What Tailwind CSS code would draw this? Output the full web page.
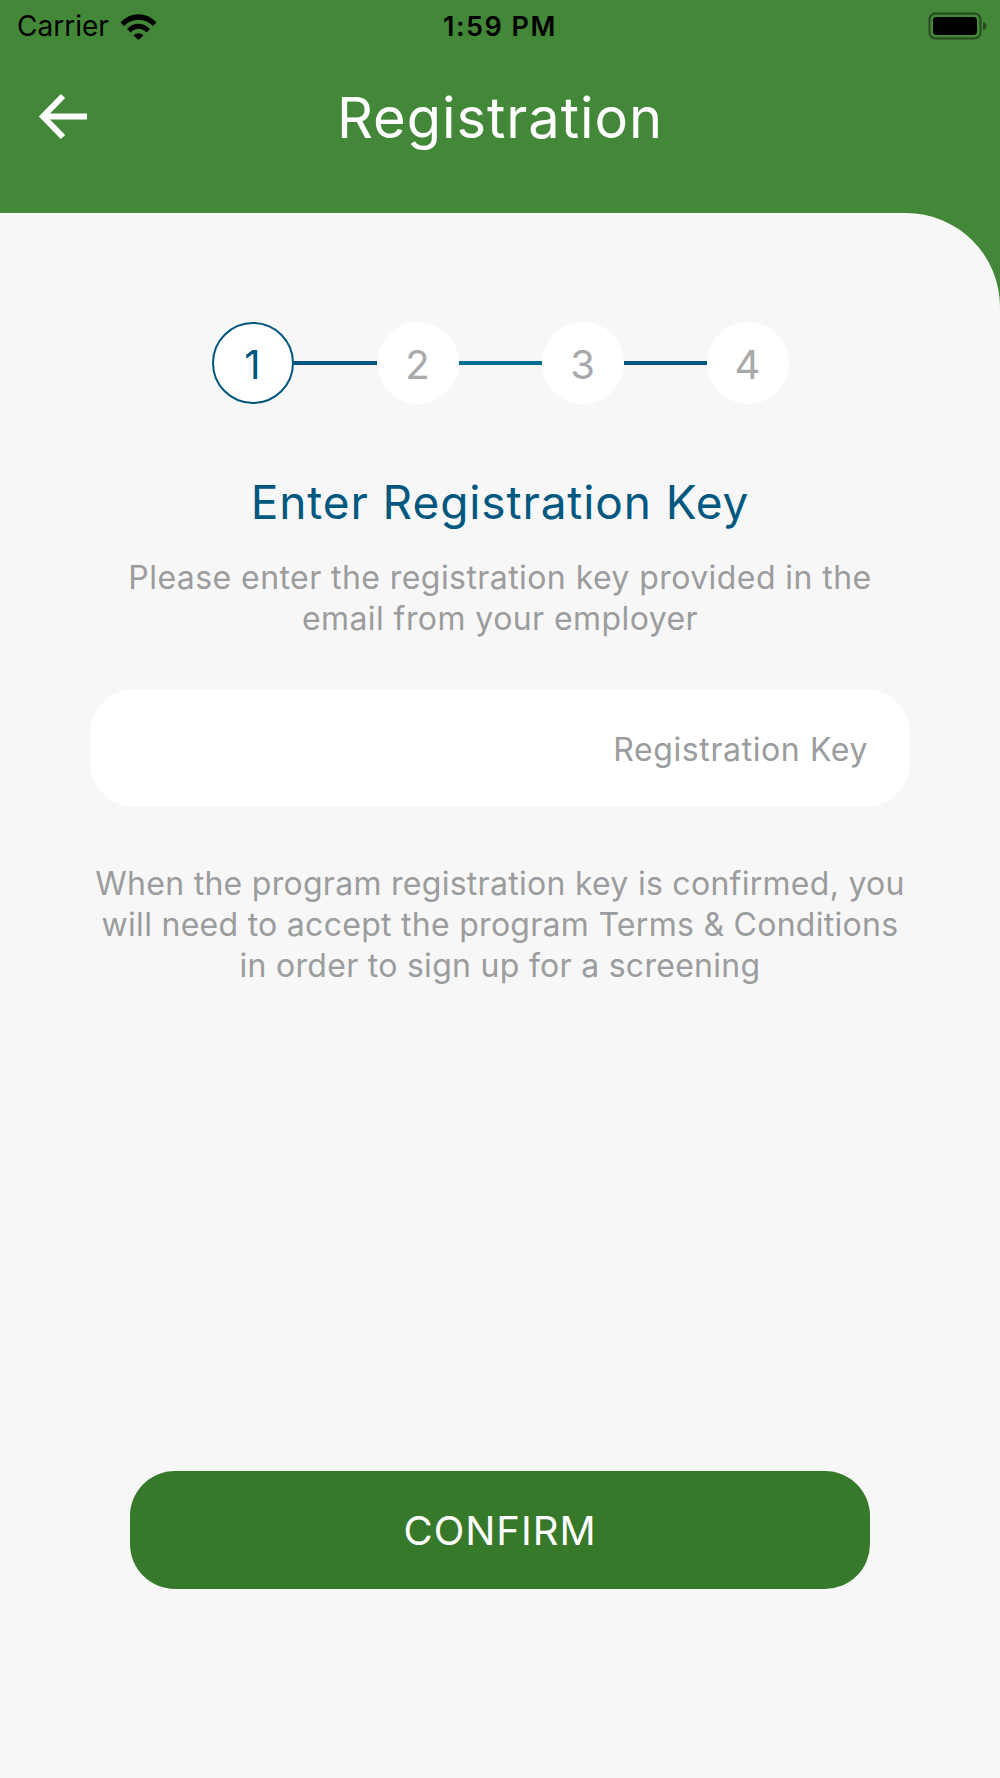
<!DOCTYPE html>
<html lang="en">
<head>
  <meta charset="UTF-8" />
  <meta name="viewport" content="width=device-width, initial-scale=1.0"/>
  <title>Registration</title>
  <script src="https://cdn.jsdelivr.net/npm/@tailwindcss/browser@4"></script>
</head>
<body class="bg-[#438838] font-['Inter',sans-serif]">
  <div class="w-[1000px] h-[1778px] flex flex-col overflow-hidden">
    <!-- status bar -->
    <div class="h-[52px] pl-[17px] pr-[12px] flex items-center justify-between text-black relative">
      <div class="flex items-center gap-[11px]">
        <span class="text-[28px] leading-none">Carrier</span>
        <svg width="37" height="27" viewBox="0 0 37 27" fill="#000">
          <path d="M0.5 9.5C10.5 -1.5 26.5 -1.5 36.5 9.5L33 13C25 4.5 12 4.5 4 13Z"/>
          <path d="M7 16C13.5 9 23.5 9 30 16L26.5 19.5C21.5 14.5 15.5 14.5 10.5 19.5Z"/>
          <path d="M13.5 22.5C16.5 19.5 20.5 19.5 23.5 22.5L18.5 27Z"/>
        </svg>
      </div>
      <span class="absolute left-[443px] top-[11px] text-[27px] leading-[32px] font-semibold tracking-[1.5px]">1:59 PM</span>
      <svg width="60" height="28" viewBox="0 0 60 28">
        <rect x="1.5" y="1.5" width="51" height="25" rx="6" fill="none" stroke="#000" stroke-opacity="0.45" stroke-width="2"/>
        <rect x="5" y="5" width="44" height="18" rx="3.5" fill="#000"/>
        <path d="M55 10C57.5 10.5 58.5 12 58.5 14C58.5 16 57.5 17.5 55 18Z" fill="#000" fill-opacity="0.45"/>
      </svg>
    </div>
    <!-- nav -->
    <div class="h-[161px] relative flex justify-center">
      <svg class="absolute left-[38px] top-[41px]" width="50" height="50" viewBox="0 0 50 50" fill="none" stroke="#fff" stroke-width="6">
        <path d="M49 23.5H6"/>
        <path d="M25 3L5 23.5L25 44"/>
      </svg>
      <h1 class="text-white text-[56px] leading-[68px] mt-[32px] font-normal tracking-[0.95px]">Registration</h1>
    </div>
    <!-- content -->
    <div class="flex-1 bg-[#f7f7f7] rounded-tr-[94px] flex flex-col items-center">
      <div class="flex items-center mt-[109px]">
        <div class="w-[82px] h-[82px] pt-[3px] rounded-full bg-white border-[2.5px] border-[#00577f] flex items-center justify-center text-[#00577f] text-[40px]">1</div>
        <div class="w-[83px] h-[4px] bg-[#00577f]"></div>
        <div class="w-[82px] h-[82px] pt-[3px] rounded-full bg-white flex items-center justify-center text-[#a8a9aa] text-[40px]">2</div>
        <div class="w-[83px] h-[4px] bg-[#006f94]"></div>
        <div class="w-[82px] h-[82px] pt-[3px] rounded-full bg-white flex items-center justify-center text-[#a8a9aa] text-[40px]">3</div>
        <div class="w-[83px] h-[4px] bg-[#00577f]"></div>
        <div class="w-[82px] h-[82px] pt-[3px] rounded-full bg-white flex items-center justify-center text-[#a8a9aa] text-[40px]">4</div>
      </div>
      <h2 class="mt-[70px] text-[#00577f] text-[46px] leading-[56px] font-normal tracking-[0.9px]">Enter Registration Key</h2>
      <p class="mt-[27px] text-center text-[#9b9c9d] text-[32px] leading-[41px] tracking-[0.43px]">Please enter the registration key provided in the<br/>email from your employer</p>
      <div class="mt-[50px] w-[820px] h-[118px] pt-[3px] bg-white rounded-[45px] flex items-center justify-end pr-[42px] text-[#9a9c9e] text-[32px] tracking-[0.6px]">Registration Key</div>
      <p class="mt-[56px] text-center text-[#9b9c9d] text-[32px] leading-[41px] tracking-[0.28px]">When the program registration key is confirmed, you<br/>will need to accept the program Terms &amp; Conditions<br/>in order to sign up for a screening</p>
      <button class="mt-[485px] w-[740px] h-[118px] pt-[1px] bg-[#37792b] rounded-[45px] text-white text-[40px] tracking-[1px]">CONFIRM</button>
    </div>
  </div>
</body>
</html>
